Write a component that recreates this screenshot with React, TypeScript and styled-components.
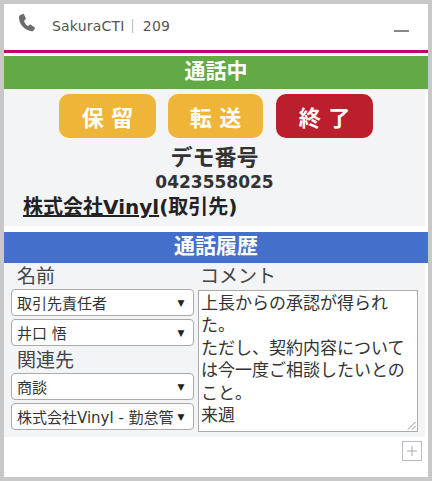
import { FC } from 'react';
import styled, { createGlobalStyle } from 'styled-components';

const GlobalStyle = createGlobalStyle`
  html, body {
    margin: 0;
    padding: 0;
    background: #fff;
  }
  body {
    font-family: 'DejaVu Sans', 'Noto Sans CJK JP', sans-serif;
  }
`;

const COMMENT =
  '上長からの承認が得られた。\nただし、契約内容については今一度ご相談したいとのこと。\n来週';

const App = () => {
  return (
    <Frame>
      <GlobalStyle />
      <Header>
        <PhoneIcon />
        <Brand>
          SakuraCTI<Separator>｜</Separator>209
        </Brand>
        <Minimize />
      </Header>
      <Rule />
      <GreenBar>通話中</GreenBar>
      <CallPanel>
        <Buttons>
          <CallButton $bg='#eeb539'>保 留</CallButton>
          <CallButton $bg='#eeb539' $narrow>転 送</CallButton>
          <CallButton $bg='#bb1e2d'>終 了</CallButton>
        </Buttons>
        <CallerName>デモ番号</CallerName>
        <CallerNumber>0423558025</CallerNumber>
        <Company>
          <u>株式会社Vinyl</u>(取引先)
        </Company>
      </CallPanel>
      <BlueBar>通話履歴</BlueBar>
      <HistoryPanel>
        <LeftColumn>
          <FieldLabel>名前</FieldLabel>
          <Select label='取引先責任者' />
          <Select label='井口 悟' />
          <FieldLabel>関連先</FieldLabel>
          <Select label='商談' />
          <Select label='株式会社Vinyl - 勤怠管理システム' />
        </LeftColumn>
        <RightColumn>
          <CommentLabel>コメント</CommentLabel>
          <CommentWrap>
            <CommentBox defaultValue={COMMENT} />
            <Grip viewBox='0 0 9 9'>
              <path d='M1 8.500 8.500 1M5 8.500 8.500 5' stroke='#888' strokeWidth='1' fill='none' />
            </Grip>
          </CommentWrap>
        </RightColumn>
      </HistoryPanel>
      <Footer>
        <PlusButton>
          <svg width='18' height='18' viewBox='0 0 18 18'>
            <path d='M9 4v10M4 9h10' stroke='#aaa' strokeWidth='1' fill='none' />
          </svg>
        </PlusButton>
      </Footer>
    </Frame>
  );
};

const PhoneIcon = () => (
  <PhoneSvg viewBox='0 0 18 18'>
    <path
      d='M2.400.9 4.900 0c.5-.2 1 0 1.200.5l1.700 3.700c.2.400.1.800-.2 1.100L6 6.900c.7 2.200 2 3.900 3.900 5.200l1.900-1.400c.3-.2.800-.2 1.100.1l3.800 2.800c.4.300.4.800.1 1.100l-1.300 1.700c-.5.700-1.200 1-2 .8C5.800 16 .8 9.500 1 3.100c0-1 .5-1.800 1.400-2.200z'
      fill='#6b6b6b'
    />
  </PhoneSvg>
);

const Select: FC<{ label: string }> = ({ label }) => (
  <SelectBox>
    <SelectText>{label}</SelectText>
    <SelectArrow>▼</SelectArrow>
  </SelectBox>
);

export default App;

/** STYLES */

const Frame = styled.div`
  box-sizing: border-box;
  width: 432px;
  height: 481px;
  border: 4px solid #c8c8c8;
  background: #fff;
  overflow: hidden;
`;

const Header = styled.div`
  height: 46px;
  display: flex;
  align-items: center;
  padding: 0 19px 4px 14px;
  box-sizing: border-box;
`;

const PhoneSvg = styled.svg`
  width: 18px;
  height: 18px;
  flex: none;
  margin-bottom: 4px;
`;

const Brand = styled.div`
  margin-left: 16px;
  font-size: 14px;
  color: #555;
  letter-spacing: 0.2px;
  white-space: nowrap;
`;

const Separator = styled.span`
  margin: 0 3px 0 1px;
  color: #888;
`;

const Minimize = styled.div`
  margin-left: auto;
  margin-top: 12px;
  width: 15px;
  height: 2px;
  background: #888;
`;

const Rule = styled.div`
  height: 3px;
  background: #c9006f;
  margin-bottom: 3px;
`;

const Bar = styled.div`
  color: #fff;
  font-weight: 700;
  font-size: 21px;
  line-height: 1;
  padding-bottom: 2px;
  box-sizing: border-box;
  display: flex;
  align-items: center;
  justify-content: center;
`;

const GreenBar = styled(Bar)`
  height: 33px;
  background: #63a945;
`;

const BlueBar = styled(Bar)`
  height: 31px;
  background: #446fca;
`;

const CallPanel = styled.div`
  height: 137px;
  margin: 0 3px 6px 0;
  padding: 5px 0 0 3px;
  box-sizing: border-box;
  background: #f3f4f6;
  display: flex;
  flex-direction: column;
  align-items: center;
`;

const Buttons = styled.div`
  display: flex;
  gap: 12px;
  height: 44px;
`;

const CallButton = styled.div<{ $bg: string; $narrow?: boolean }>`
  width: ${(p) => (p.$narrow ? 95 : 97)}px;
  margin-right: ${(p) => (p.$narrow ? 1 : 0)}px;
  background: ${(p) => p.$bg};
  border-radius: 10px;
  color: #fff;
  font-size: 22px;
  font-weight: 700;
  display: flex;
  align-items: center;
  justify-content: center;
`;

const CallerName = styled.div`
  margin: 7px 3px 0 0;
  font-size: 22px;
  line-height: 26px;
  font-weight: 700;
  color: #333;
`;

const CallerNumber = styled.div`
  margin-right: 3px;
  font-size: 17px;
  line-height: 22px;
  font-weight: 700;
  color: #333;
`;

const Company = styled.div`
  align-self: flex-start;
  margin-left: 16px;
  font-size: 20px;
  line-height: 28px;
  font-weight: 700;
  color: #222;
  white-space: nowrap;
`;

const HistoryPanel = styled.div`
  height: 174px;
  margin-right: 3px;
  padding: 2px 7px 0 7px;
  box-sizing: border-box;
  background: #f3f4f6;
  display: flex;
  gap: 4px;
`;

const LeftColumn = styled.div`
  width: 183px;
  flex: none;
  display: flex;
  flex-direction: column;
`;

const RightColumn = styled.div`
  flex: 1;
  min-width: 0;
  display: flex;
  flex-direction: column;
`;

const FieldLabel = styled.div`
  margin: 0 0 2px 6px;
  font-size: 19px;
  line-height: 22px;
  color: #444;
`;

const CommentLabel = styled(FieldLabel)`
  margin: 0 0 3px 2px;
`;

const SelectBox = styled.div`
  box-sizing: border-box;
  height: 27px;
  margin-bottom: 3px;
  padding: 0 5px 0 5px;
  border: 1px solid #aaa;
  border-radius: 4px;
  background: #fff;
  display: flex;
  align-items: center;
  font-size: 15px;
  color: #333;
`;

const SelectText = styled.span`
  flex: 1;
  min-width: 0;
  overflow: hidden;
  white-space: nowrap;
`;

const SelectArrow = styled.span`
  flex: none;
  width: 14px;
  font-size: 9px;
  color: #222;
  text-align: center;
`;

const CommentWrap = styled.div`
  position: relative;
  height: 142px;
`;

const CommentBox = styled.textarea`
  display: block;
  box-sizing: border-box;
  width: 100%;
  height: 100%;
  margin: 0;
  padding: 1px 2px;
  border: 1px solid #aaa;
  border-radius: 0;
  outline: none;
  background: #fff;
  font-family: inherit;
  font-size: 17px;
  line-height: 22.4px;
  color: #333;
  resize: none;
`;

const Grip = styled.svg`
  position: absolute;
  right: 2px;
  bottom: 2px;
  width: 9px;
  height: 9px;
`;

const Footer = styled.div`
  display: flex;
  justify-content: flex-end;
  padding: 4px 6px 0 0;
`;

const PlusButton = styled.div`
  box-sizing: border-box;
  width: 20px;
  height: 20px;
  border: 1px solid #bbb;
  display: flex;
`;
